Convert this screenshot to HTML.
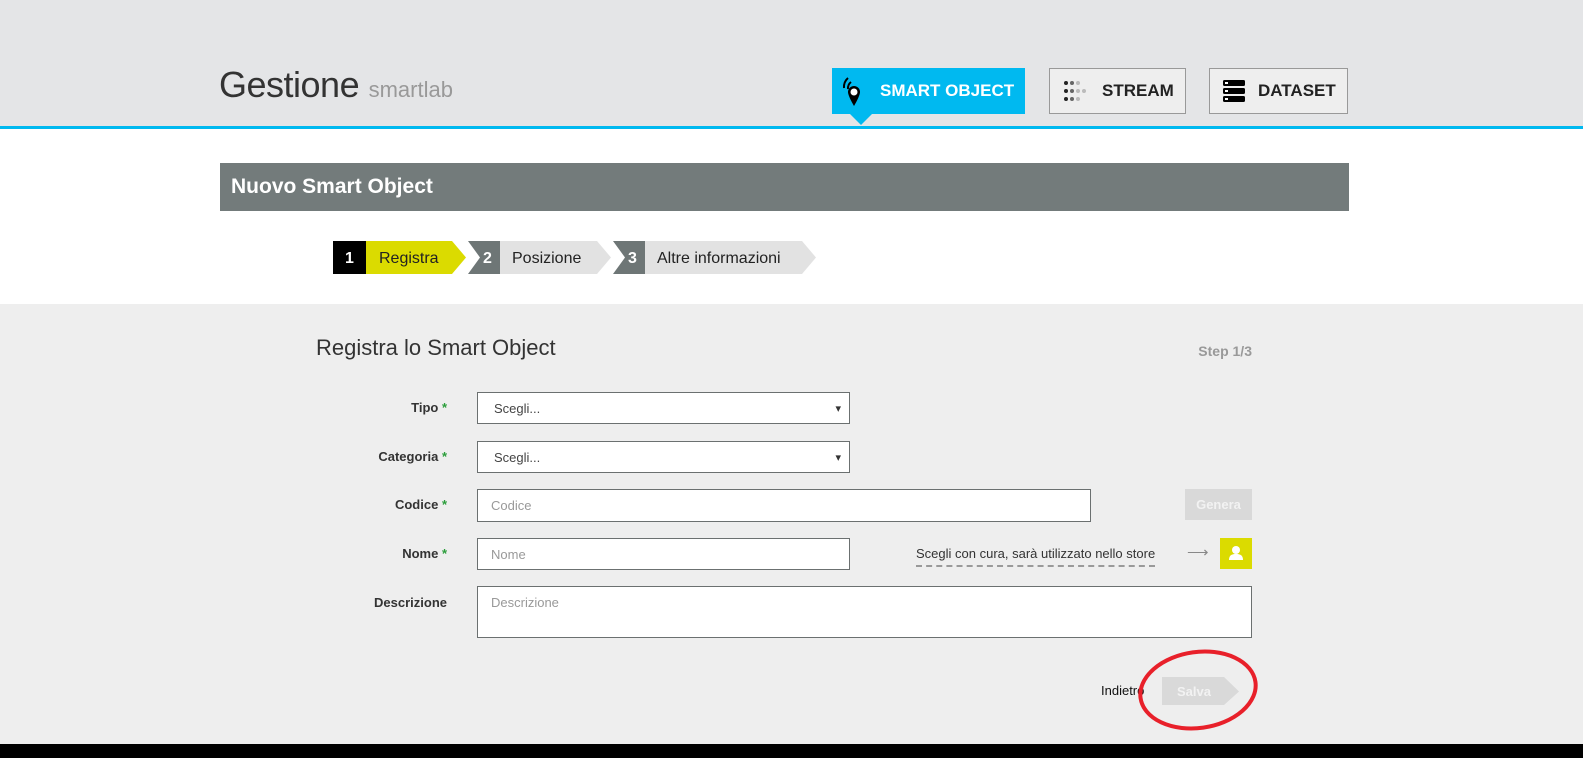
<!DOCTYPE html>
<html><head><meta charset="utf-8"><style>
*{margin:0;padding:0;box-sizing:border-box}
body{width:1583px;height:758px;position:relative;overflow:hidden;background:#eeeeee;font-family:"Liberation Sans",sans-serif;color:#222}
.a{position:absolute}
.hdr{left:0;top:0;width:1583px;height:126px;background:#e4e5e7}
.blue{left:0;top:126px;width:1583px;height:3px;background:#00b9f0}
.white{left:0;top:129px;width:1583px;height:175px;background:#fff}
.btn{top:68px;height:46px;border:1px solid #999;background:#eeeeee;font-weight:bold;font-size:17px;display:flex;align-items:center}
.lbl{width:200px;text-align:right;font-size:13px;font-weight:bold;color:#333;left:247px}
.lbl b{color:#2a9d3a}
.in{background:#fff;border:1px solid #6b7070;font-size:13px;color:#999;padding-left:13px;display:flex;align-items:center}
.sel{color:#444;padding-left:16px}
.sel:after{content:"▾";position:absolute;right:8px;font-size:11px;color:#333}
</style></head><body>
<div class="a hdr"></div><div class="a blue"></div><div class="a white"></div>
<div class="a" style="left:219px;top:64px;font-size:36px;color:#333;letter-spacing:-0.5px">Gestione <span style="font-size:22px;color:#999;letter-spacing:0">smartlab</span></div>
<div class="a" style="left:832px;top:68px;width:193px;height:46px;background:#00b9f0;color:#fff;font-weight:bold;font-size:17px;display:flex;align-items:center">
<svg width="48" height="46" viewBox="0 0 48 46"><path d="M19 14a8 8 0 0 0-3 7" stroke="#000" stroke-width="2" fill="none"/><path d="M16 10a12 12 0 0 0-4 10" stroke="#000" stroke-width="2" fill="none"/><path d="M28 24a6 6 0 1 0-12 0c0 4 6 14 6 14s6-10 6-14z" fill="#000"/><circle cx="22" cy="24" r="3.5" fill="#fff"/></svg>SMART OBJECT</div>
<div class="a" style="left:849px;top:113px;width:0;height:0;border-left:12px solid transparent;border-right:12px solid transparent;border-top:12px solid #00b9f0"></div>
<div class="a btn" style="left:1049px;width:137px"><svg width="52" height="30" viewBox="0 0 52 30"><g fill="#222"><circle cx="16" cy="7" r="2"/><circle cx="16" cy="15" r="2"/><circle cx="16" cy="23" r="2"/></g><g fill="#666"><circle cx="22" cy="7" r="2"/><circle cx="22" cy="15" r="2"/><circle cx="22" cy="23" r="2"/></g><g fill="#bbb"><circle cx="28" cy="7" r="2"/><circle cx="28" cy="15" r="2"/><circle cx="28" cy="23" r="2"/><circle cx="34" cy="15" r="2"/></g></svg>STREAM</div>
<div class="a btn" style="left:1209px;width:139px"><svg width="48" height="30" viewBox="0 0 48 30"><g fill="#000"><rect x="13" y="4" width="22" height="6" rx="1.5"/><rect x="13" y="12" width="22" height="6" rx="1.5"/><rect x="13" y="20" width="22" height="6" rx="1.5"/></g><g fill="#fff"><rect x="15" y="6" width="3" height="2"/><rect x="15" y="14" width="3" height="2"/><rect x="15" y="22" width="3" height="2"/></g></svg>DATASET</div>
<div class="a" style="left:220px;top:163px;width:1129px;height:48px;background:#737b7b;color:#fff;font-weight:bold;font-size:21px;padding-left:11px;line-height:48px">Nuovo Smart Object</div>
<svg class="a" style="left:333px;top:241px" width="490" height="34" viewBox="0 0 490 34" font-family="Liberation Sans" font-size="16">
<rect x="0" y="0" width="33" height="33" fill="#000"/><polygon points="33,0 119,0 133,16.5 119,33 33,33" fill="#dbdb00"/>
<polygon points="135,0 167,0 167,33 135,33 147,16.5" fill="#6e7676"/><polygon points="167,0 264,0 278,16.5 264,33 167,33" fill="#e2e2e2"/>
<polygon points="280,0 312,0 312,33 280,33 292,16.5" fill="#6e7676"/><polygon points="312,0 469,0 483,16.5 469,33 312,33" fill="#e2e2e2"/>
<text x="12" y="22" fill="#fff" font-weight="bold">1</text><text x="46" y="22" fill="#222">Registra</text>
<text x="150" y="22" fill="#fff" font-weight="bold">2</text><text x="179" y="22" fill="#222">Posizione</text>
<text x="295" y="22" fill="#fff" font-weight="bold">3</text><text x="324" y="22" fill="#222">Altre informazioni</text>
</svg>
<div class="a" style="left:316px;top:335px;font-size:22px;color:#333">Registra lo Smart Object</div>
<div class="a" style="left:1150px;top:343px;width:102px;text-align:right;font-size:14px;font-weight:bold;color:#999">Step 1/3</div>
<div class="a lbl" style="top:400px">Tipo <b>*</b></div>
<div class="a in sel" style="left:477px;top:392px;width:373px;height:32px">Scegli...</div>
<div class="a lbl" style="top:449px">Categoria <b>*</b></div>
<div class="a in sel" style="left:477px;top:441px;width:373px;height:32px">Scegli...</div>
<div class="a lbl" style="top:497px">Codice <b>*</b></div>
<div class="a in" style="left:477px;top:489px;width:614px;height:33px">Codice</div>
<div class="a" style="left:1185px;top:489px;width:67px;height:31px;background:#d9d9d9;color:#f2f2f2;font-size:13px;font-weight:bold;text-align:center;line-height:31px">Genera</div>
<div class="a lbl" style="top:546px">Nome <b>*</b></div>
<div class="a in" style="left:477px;top:538px;width:373px;height:32px">Nome</div>
<div class="a" style="left:916px;top:546px;font-size:13px;color:#333;border-bottom:2px dashed #999;padding-bottom:4px">Scegli con cura, sarà utilizzato nello store</div>
<div class="a" style="left:1187px;top:543px;font-size:15px;color:#888">⟶</div>
<div class="a" style="left:1220px;top:538px;width:32px;height:31px;background:#dbdb00"><svg width="32" height="31" viewBox="0 0 32 31"><circle cx="16" cy="12" r="4" fill="#fff"/><path d="M9 22c0-5 3-6 7-6s7 1 7 6z" fill="#fff"/></svg></div>
<div class="a lbl" style="top:595px">Descrizione</div>
<div class="a in" style="left:477px;top:586px;width:775px;height:52px;align-items:flex-start;padding-top:8px">Descrizione</div>
<div class="a" style="left:1101px;top:683px;font-size:13px;color:#111">Indietro</div>
<svg class="a" style="left:1162px;top:677px" width="80" height="29"><polygon points="0,0 62,0 77,14.5 62,28 0,28" fill="#d9d9d9"/><text x="15" y="19" font-family="Liberation Sans" font-size="13" font-weight="bold" fill="#f2f2f2">Salva</text></svg>
<svg class="a" style="left:1135px;top:646px" width="128" height="88"><ellipse cx="63" cy="44" rx="58" ry="38" fill="none" stroke="#e8202a" stroke-width="4" transform="rotate(-8 63 44)"/></svg>
<div class="a" style="left:0;top:744px;width:1583px;height:14px;background:#000"></div>
</body></html>
